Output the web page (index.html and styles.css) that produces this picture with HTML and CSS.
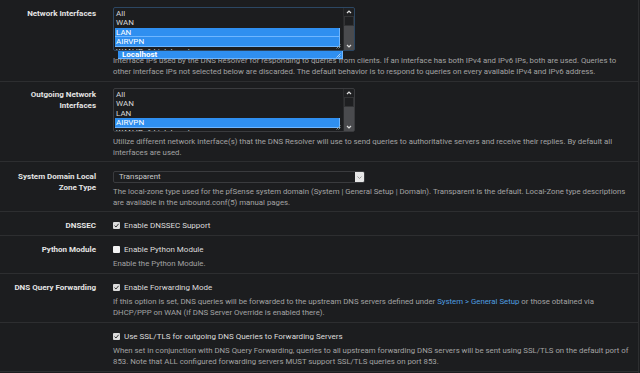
FILE: index.html
```html
<!DOCTYPE html>
<html>
<head>
<meta charset="utf-8">
<link rel="stylesheet" href="styles.css">
</head>
<body>
<div class="panel">
  <div class="row r-first">
    <div class="label">Network Interfaces</div>
    <div class="content">
      <div class="multi focus">
        <div class="opts">
          <div class="opt">All</div>
          <div class="opt">WAN</div>
          <div class="opt sel">LAN</div>
          <div class="opt sel">AIRVPN</div>
          <div class="opt">WAN IPv6 Link-Local</div>
          <svg class="grip" width="5" height="5" viewBox="0 0 5 5"><path d="M0.5 4.5 L4.5 0.5 M2.5 4.5 L4.5 2.5" stroke="#9aa" stroke-width="0.8"/></svg>
        </div>
        <div class="sbar">
          <div class="sbtn"><svg width="6" height="4" viewBox="0 0 6 4"><path d="M1 3 L3 1 L5 3" fill="none" stroke="#ddd" stroke-width="1.2"/></svg></div>
          <div class="sthumb"></div>
          <div class="strack"></div>
          <div class="sbtn dn"><svg width="6" height="4" viewBox="0 0 6 4"><path d="M1 1 L3 3 L5 1" fill="none" stroke="#ddd" stroke-width="1.2"/></svg></div>
        </div>
      </div>
      <div class="float-opt">Localhost<svg class="grip2" width="5" height="5" viewBox="0 0 5 5"><path d="M0.5 4.5 L4.5 0.5 M2.5 4.5 L4.5 2.5" stroke="#cde" stroke-width="0.8"/></svg></div>
      <p class="help">Interface IPs used by the DNS Resolver for responding to queries from clients. If an interface has both IPv4 and IPv6 IPs, both are used. Queries to other interface IPs not selected below are discarded. The default behavior is to respond to queries on every available IPv4 and IPv6 address.</p>
    </div>
  </div>

  <div class="row r-tight">
    <div class="label">Outgoing Network Interfaces</div>
    <div class="content">
      <div class="multi">
        <div class="opts">
          <div class="opt">All</div>
          <div class="opt">WAN</div>
          <div class="opt">LAN</div>
          <div class="opt sel">AIRVPN</div>
          <div class="opt">WAN IPv6 Link-Local</div>
          <svg class="grip" width="5" height="5" viewBox="0 0 5 5"><path d="M0.5 4.5 L4.5 0.5 M2.5 4.5 L4.5 2.5" stroke="#9aa" stroke-width="0.8"/></svg>
        </div>
        <div class="sbar">
          <div class="sbtn"><svg width="6" height="4" viewBox="0 0 6 4"><path d="M1 3 L3 1 L5 3" fill="none" stroke="#ddd" stroke-width="1.2"/></svg></div>
          <div class="sthumb"></div>
          <div class="strack"></div>
          <div class="sbtn dn"><svg width="6" height="4" viewBox="0 0 6 4"><path d="M1 1 L3 3 L5 1" fill="none" stroke="#ddd" stroke-width="1.2"/></svg></div>
        </div>
      </div>
      <p class="help">Utilize different network interface(s) that the DNS Resolver will use to send queries to authoritative servers and receive their replies. By default all interfaces are used.</p>
    </div>
  </div>

  <div class="row r-tight">
    <div class="label lbl-sel">System Domain Local Zone Type</div>
    <div class="content">
      <div class="select">
        <span class="sval">Transparent</span>
        <span class="sarrow"><svg width="5" height="3" viewBox="0 0 5 3"><path d="M0.5 0.5 L2.5 2.5 L4.5 0.5" fill="none" stroke="#888" stroke-width="0.8"/></svg></span>
      </div>
      <p class="help sel-help">The local-zone type used for the pfSense system domain (System | General Setup | Domain). Transparent is the default. Local-Zone type descriptions are available in the unbound.conf(5) manual pages.</p>
    </div>
  </div>

  <div class="row r-tight">
    <div class="label lbl-chk">DNSSEC</div>
    <div class="content">
      <div class="check"><span class="box on"><svg width="7" height="7" viewBox="0 0 7 7"><path d="M1.5 3.6 L3 5 L5.6 1.8" fill="none" stroke="#333" stroke-width="1"/></svg></span>Enable DNSSEC Support</div>
    </div>
  </div>

  <div class="row">
    <div class="label lbl-chk">Python Module</div>
    <div class="content">
      <div class="check"><span class="box"></span>Enable Python Module</div>
      <p class="help chk-help">Enable the Python Module.</p>
    </div>
  </div>

  <div class="row">
    <div class="label lbl-chk">DNS Query Forwarding</div>
    <div class="content">
      <div class="check"><span class="box on"><svg width="7" height="7" viewBox="0 0 7 7"><path d="M1.5 3.6 L3 5 L5.6 1.8" fill="none" stroke="#333" stroke-width="1"/></svg></span>Enable Forwarding Mode</div>
      <p class="help chk-help">If this option is set, DNS queries will be forwarded to the upstream DNS servers defined under <span class="link">System &gt; General Setup</span> or those obtained via DHCP/PPP on WAN (if DNS Server Override is enabled there).</p>
    </div>
  </div>

  <div class="row">
    <div class="label lbl-chk"></div>
    <div class="content">
      <div class="check"><span class="box on"><svg width="7" height="7" viewBox="0 0 7 7"><path d="M1.5 3.6 L3 5 L5.6 1.8" fill="none" stroke="#333" stroke-width="1"/></svg></span>Use SSL/TLS for outgoing DNS Queries to Forwarding Servers</div>
      <p class="help chk-help">When set in conjunction with DNS Query Forwarding, queries to all upstream forwarding DNS servers will be sent using SSL/TLS on the default port of 853. Note that ALL configured forwarding servers MUST support SSL/TLS queries on port 853.</p>
    </div>
  </div>
</div>
</body>
</html>
```
FILE: styles.css
```css
html, body {
  margin: 0;
  padding: 0;
  background: #1c1d1f;
}
body {
  font-family: Roboto, "Liberation Sans", sans-serif;
  font-size: 7.8px;
  color: #a3a3a3;
  width: 640px;
  height: 373px;
  overflow: hidden;
}
.panel {
  width: 638px;
  border-right: 1px solid #2d2e30;
  min-height: 373px;
}
.row {
  display: grid;
  grid-template-columns: 113px 1fr;
  padding: 6px 0 4px;
  border-bottom: 1px solid #2d2e30;
}
.r-first {
  padding-top: 7px;
}
.r-tight {
  padding-bottom: 3px;
}
.label {
  box-sizing: border-box;
  padding: 1px 17px 0 12px;
  text-align: right;
  font-weight: bold;
  font-size: 8px;
  color: #e4e4e4;
  line-height: 11px;
}
.lbl-sel {
  padding-top: 2.5px;
}
.lbl-chk {
  padding-top: 1.5px;
}
.content {
  position: relative;
  padding-right: 6px;
}
.help {
  margin: 4px 0 0;
  line-height: 11px;
  color: #a3a3a3;
}
.sel-help {
  margin-top: 3px;
}
.chk-help {
  margin-top: 2px;
}
.link {
  color: #4f9de0;
}
.multi {
  box-sizing: border-box;
  width: 242px;
  height: 44px;
  border: 1px solid #3a3b3e;
  border-radius: 2px;
  display: flex;
  overflow: hidden;
  background: #1c1d1f;
}
.multi.focus {
  border-color: #2c4763;
}
.opts {
  flex: 1;
  position: relative;
  overflow: hidden;
  padding-top: 0.5px;
}
.opt {
  height: 9.6px;
  line-height: 9.6px;
  padding-left: 2px;
  color: #d6d6d6;
  white-space: nowrap;
  font-size: 8px;
}
.opt.sel {
  background: #2f8ff0;
  color: #fff;
  box-shadow: inset -1px -1px 0 #6fb6ff;
  margin: 0 3px 0 1px;
  padding-left: 1px;
}
.grip {
  position: absolute;
  right: 2px;
  bottom: 1px;
}
.sbar {
  width: 10px;
  display: flex;
  flex-direction: column;
  background: #4a4b4e;
  border-left: 1px solid #2a2b2d;
}
.sbtn {
  height: 8px;
  display: flex;
  align-items: center;
  justify-content: center;
  background: #1f2022;
}
.sbtn.dn {
  background: #4a4b4e;
  margin-top: auto;
}
.sthumb {
  height: 10px;
  background: #1e1f21;
  border: 1px solid #333436;
  box-sizing: border-box;
}
.strack {
  flex: 1;
}
.float-opt {
  position: absolute;
  left: 5px;
  top: 44px;
  width: 225px;
  height: 8px;
  line-height: 8px;
  background: #2f8ff0;
  box-shadow: inset -1px -1px 0 #6fb6ff;
  color: #fff;
  font-weight: bold;
  font-size: 8px;
  padding-left: 4px;
  box-sizing: border-box;
}
.grip2 {
  position: absolute;
  right: 2px;
  bottom: 1px;
}
.select {
  box-sizing: border-box;
  margin-top: 3px;
  width: 252px;
  height: 12px;
  border: 1px solid #3a3b3e;
  border-radius: 2px;
  display: flex;
  align-items: stretch;
}
.sval {
  flex: 1;
  line-height: 10px;
  padding-left: 5px;
  color: #c9c9c9;
}
.sarrow {
  width: 9px;
  background: #e6e6e6;
  display: flex;
  align-items: center;
  justify-content: center;
  border-radius: 0 1px 1px 0;
}
.check {
  height: 14px;
  display: flex;
  align-items: center;
  color: #dcdcdc;
  font-size: 8px;
}
.box {
  width: 7px;
  height: 7px;
  background: #f2f2f2;
  border-radius: 1px;
  margin-right: 4px;
  display: inline-flex;
}
.box.on {
  background: #dcdcdc;
}
```
